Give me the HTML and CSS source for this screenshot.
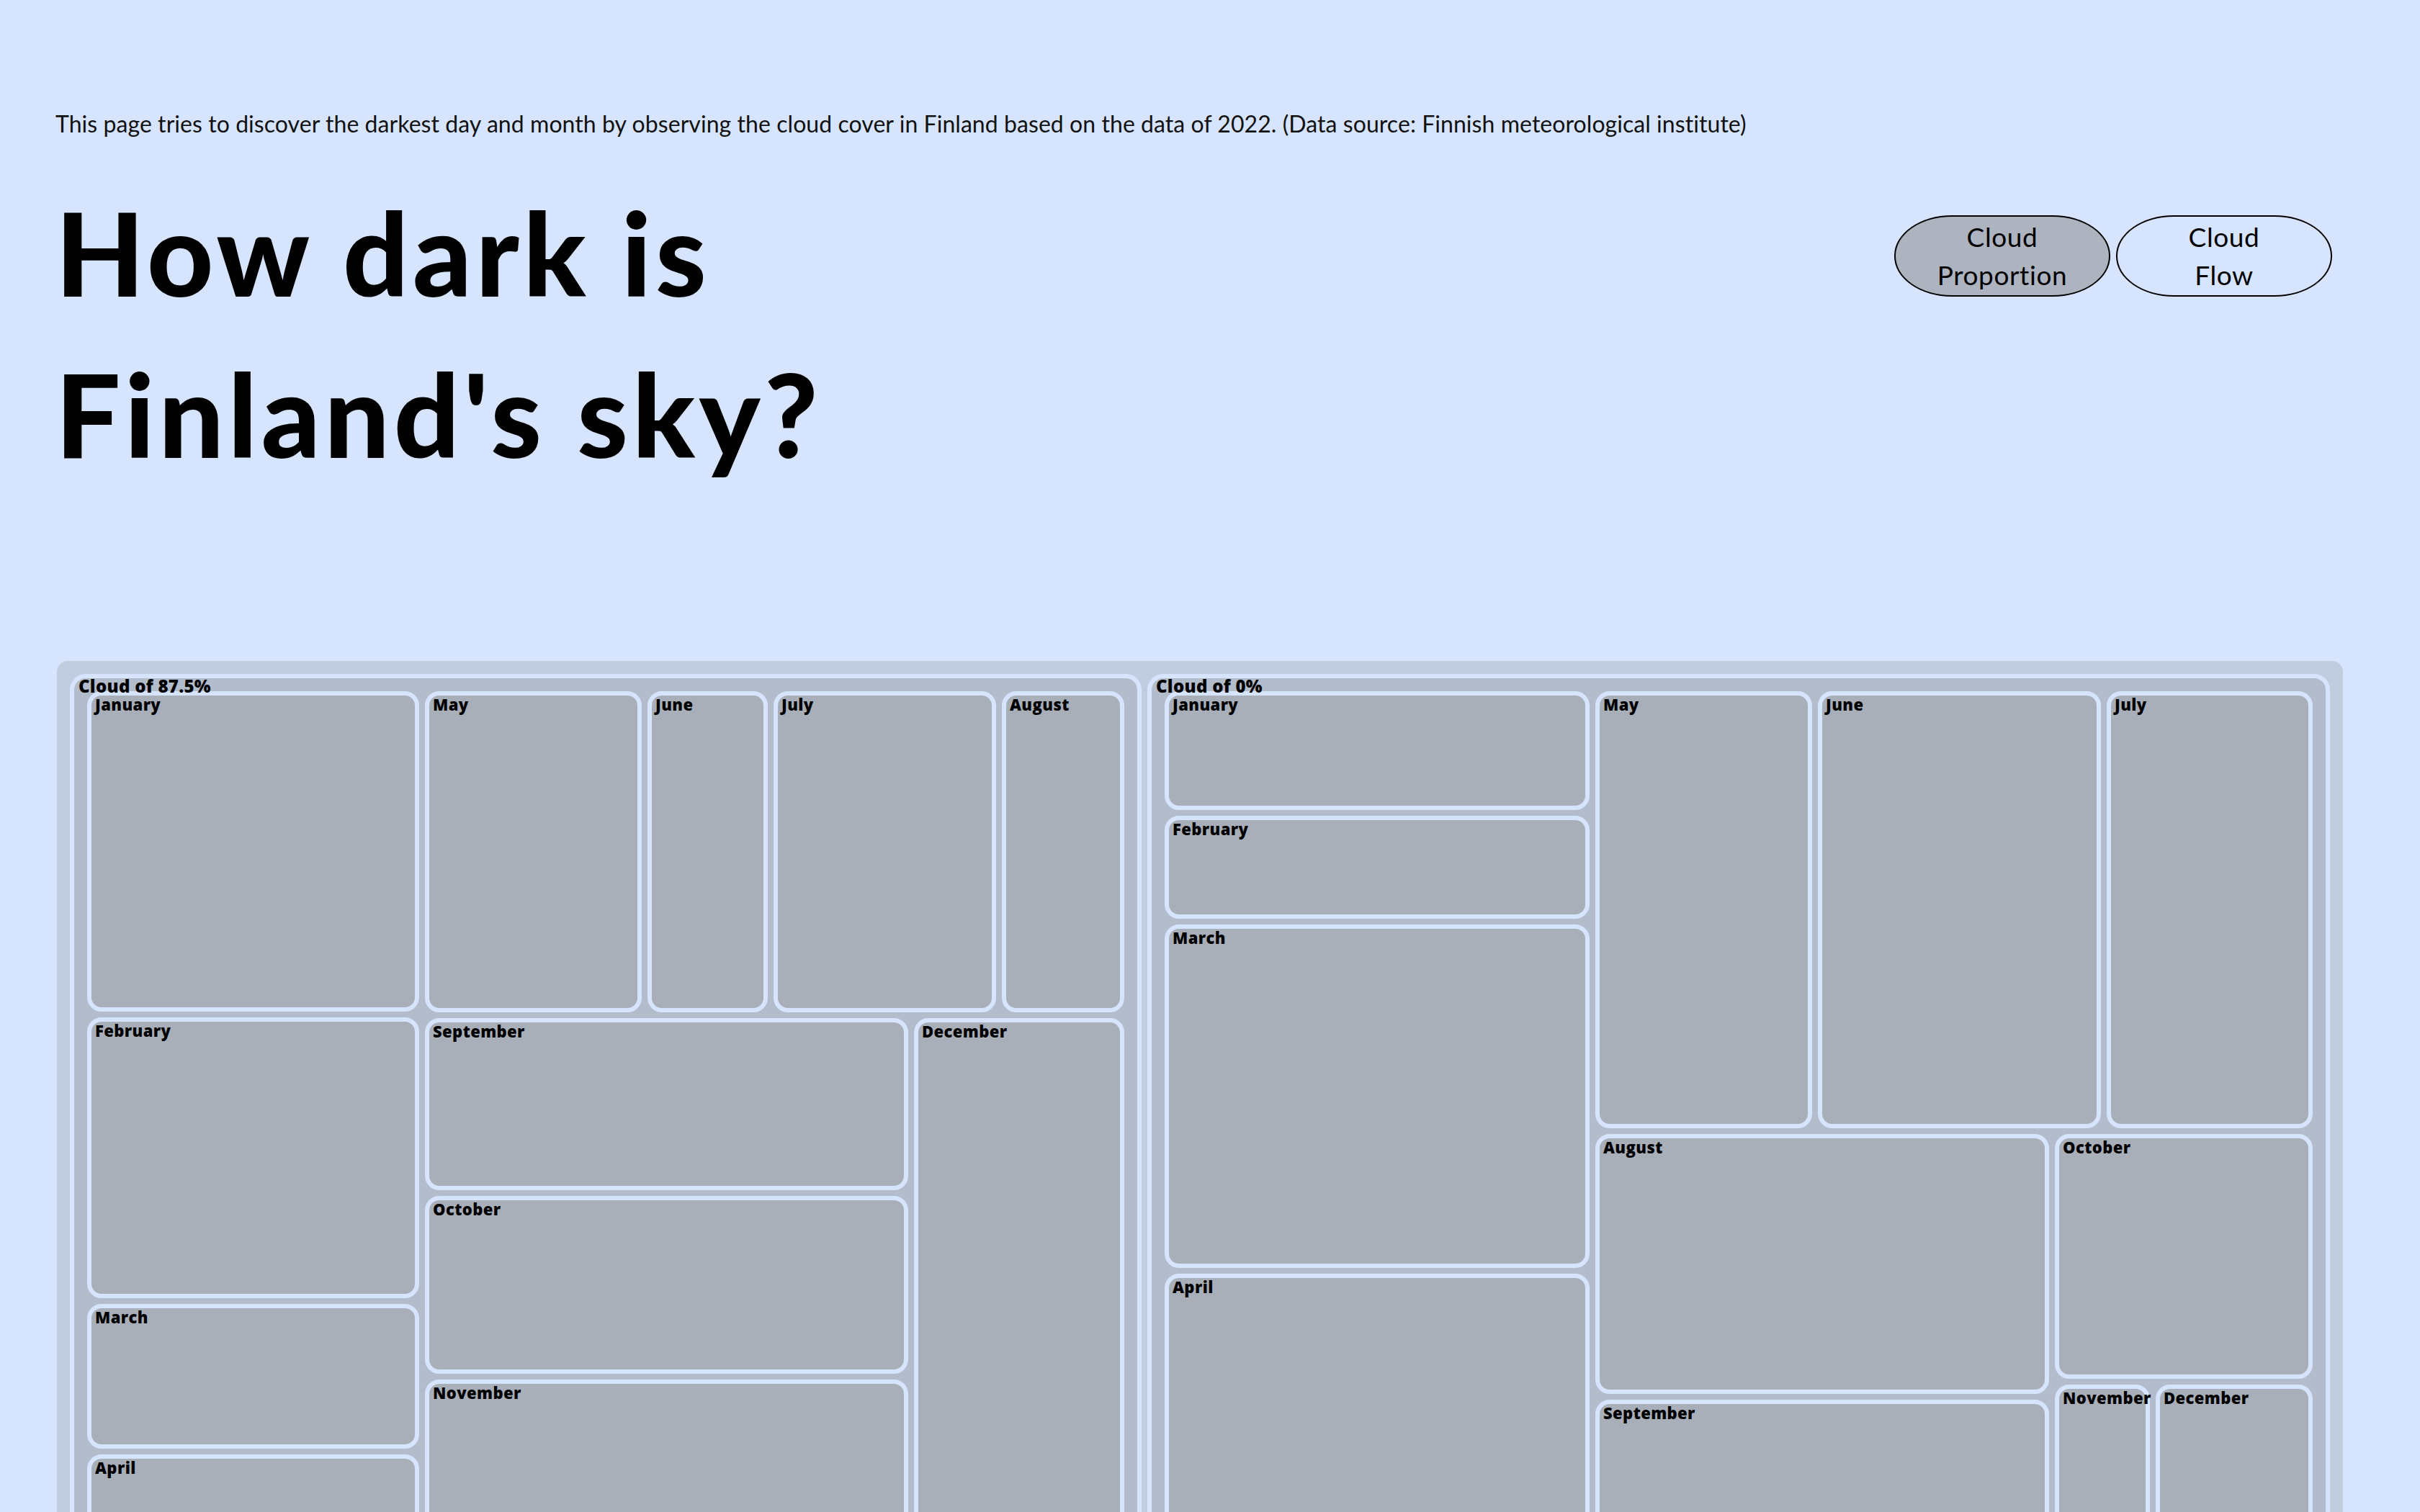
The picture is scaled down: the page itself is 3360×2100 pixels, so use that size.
FILE: index.html
```html
<!DOCTYPE html>
<html lang="en">
<head>
<meta charset="utf-8">
<title>How dark is Finland's sky?</title>
<link rel="stylesheet" href="styles.css">
</head>
<body>
<main class="page">
  <p class="intro">This page tries to discover the darkest day and month by observing the cloud cover in Finland based on the data of 2022. (Data source: Finnish meteorological institute)</p>
  <header class="hero">
    <h1 class="title">How dark is<br>Finland's sky?</h1>
    <nav class="views">
      <button class="view-btn active" type="button"><span>Cloud Proportion</span></button>
      <button class="view-btn" type="button"><span>Cloud Flow</span></button>
    </nav>
  </header>

  <section class="treemap">
    <div class="group fix" style="flex-basis:1488px">
      <span class="group-label">Cloud of 87.5%</span>
      <div class="row rest">
        <div class="col fix" style="flex-basis:461px">
          <div class="tile fix" style="flex-basis:445px">January</div>
          <div class="tile fix" style="flex-basis:390px">February</div>
          <div class="tile fix" style="flex-basis:201px">March</div>
          <div class="tile rest">April</div>
        </div>
        <div class="col rest">
          <div class="row fix" style="flex-basis:446px">
            <div class="tile fix" style="flex-basis:301px">May</div>
            <div class="tile fix" style="flex-basis:167px">June</div>
            <div class="tile fix" style="flex-basis:309px">July</div>
            <div class="tile rest">August</div>
          </div>
          <div class="row rest">
            <div class="col fix" style="flex-basis:671px">
              <div class="tile fix" style="flex-basis:239px">September</div>
              <div class="tile fix" style="flex-basis:247px">October</div>
              <div class="tile rest">November</div>
            </div>
            <div class="tile rest">December</div>
          </div>
        </div>
      </div>
    </div>

    <div class="group rest">
      <span class="group-label">Cloud of 0%</span>
      <div class="row rest">
        <div class="col fix" style="flex-basis:590px">
          <div class="tile fix" style="flex-basis:165px">January</div>
          <div class="tile fix" style="flex-basis:143px">February</div>
          <div class="tile fix" style="flex-basis:477px">March</div>
          <div class="tile rest">April</div>
        </div>
        <div class="col rest">
          <div class="row fix" style="flex-basis:607px">
            <div class="tile fix" style="flex-basis:301px">May</div>
            <div class="tile fix" style="flex-basis:393px">June</div>
            <div class="tile rest">July</div>
          </div>
          <div class="row rest">
            <div class="col fix" style="flex-basis:630px">
              <div class="tile fix" style="flex-basis:361px">August</div>
              <div class="tile rest">September</div>
            </div>
            <div class="col rest">
              <div class="tile fix" style="flex-basis:340px">October</div>
              <div class="row rest">
                <div class="tile fix" style="flex-basis:132px">November</div>
                <div class="tile rest">December</div>
              </div>
            </div>
          </div>
        </div>
      </div>
    </div>
  </section>
</main>
</body>
</html>
```

FILE: styles.css
```css
html {
  background: #d6e4fd;
}

body {
  margin: 0;
  background: #d6e4fd;
  color: #000;
  font-family: Lato, "Noto Sans", sans-serif;
}

::-webkit-scrollbar {
  width: 30px;
}

::-webkit-scrollbar-track {
  background: #fafafa;
  border-left: 1px solid #e6e6e6;
}

::-webkit-scrollbar-thumb {
  background: #c1c1c1;
  border: solid transparent;
  border-width: 0 5px 0 7px;
  background-clip: padding-box;
}

.page {
  width: 3253px;
  box-sizing: border-box;
  padding: 0 0 171px 79px;
}

.intro {
  margin: 150px 0 0 -2px;
  font-size: 32px;
  line-height: 44px;
  font-weight: 400;
  letter-spacing: 0.06px;
  color: #111;
}

.hero {
  display: flex;
  justify-content: space-between;
  align-items: flex-start;
  padding-right: 15px;
  margin-top: 44px;
}

.title {
  margin: 0 0 0 -2px;
  font-size: 160px;
  line-height: 224px;
  font-weight: 900;
  letter-spacing: 5.6px;
}

.views {
  display: flex;
  gap: 8px;
  margin-top: 61px;
}

.view-btn {
  width: 300px;
  height: 113px;
  box-sizing: border-box;
  border: 2px solid #000;
  border-radius: 80px / 56px;
  background: transparent;
  color: #000;
  font-family: Lato, "Noto Sans", sans-serif;
  font-size: 37px;
  line-height: 53px;
  letter-spacing: 0.6px;
  padding: 0 0 2px;
  display: flex;
  align-items: center;
  justify-content: center;
  text-align: center;
  cursor: pointer;
}

.view-btn span {
  display: block;
  width: min-content;
}

.view-btn.active {
  background: #adb3bf;
}

.treemap {
  margin-top: 232px;
  width: 3174px;
  height: 2084px;
  box-sizing: border-box;
  padding: 18px;
  display: flex;
  gap: 8px;
  background: #c1cddf;
  border-radius: 15px;
}

.row {
  display: flex;
  gap: 8px;
}

.col {
  display: flex;
  flex-direction: column;
  gap: 8px;
}

.fix {
  flex-grow: 0;
  flex-shrink: 0;
  min-width: 0;
  min-height: 0;
}

.rest {
  flex: 1 1 0;
  min-width: 0;
  min-height: 0;
}

.group {
  position: relative;
  box-sizing: border-box;
  display: flex;
  padding: 18px;
  border: 6px solid #d6e4fd;
  border-radius: 22px;
  background: #b3bccb;
}

.group-label {
  position: absolute;
  top: -4px;
  left: 6px;
  font-family: "Open Sans", Lato, sans-serif;
  font-size: 24px;
  line-height: 29px;
  font-weight: 800;
  letter-spacing: 0.3px;
  white-space: nowrap;
  z-index: 1;
}

.tile {
  box-sizing: border-box;
  border: 6px solid #d6e4fd;
  border-radius: 20px;
  background: #a8afb9;
  padding: 0 5px;
  font-family: "Open Sans", Lato, sans-serif;
  font-size: 22px;
  line-height: 24px;
  font-weight: 800;
  letter-spacing: 0.4px;
  white-space: nowrap;
}
```
